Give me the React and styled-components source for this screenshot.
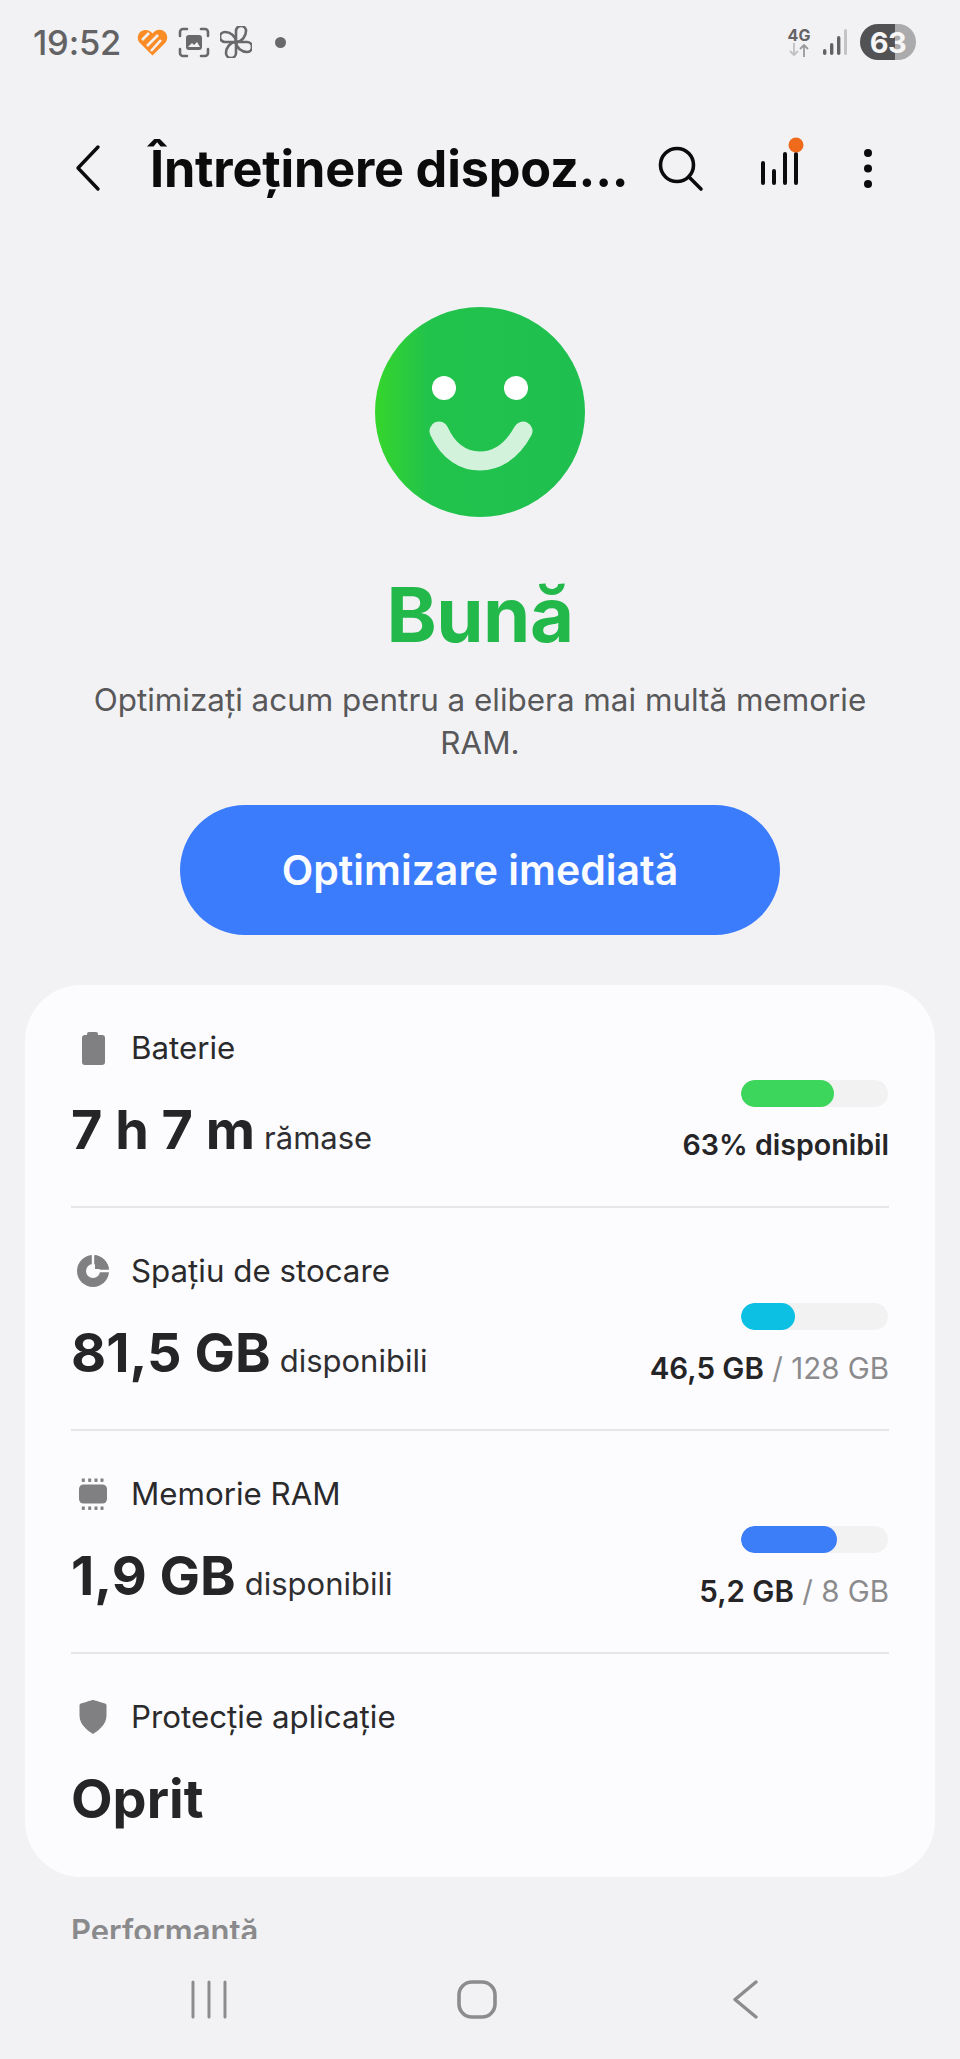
import React from "react";
import styled, { createGlobalStyle } from "styled-components";

const Global = createGlobalStyle`
  html, body { margin: 0; padding: 0; background: #f2f2f4; overflow: hidden; }
  body { font-family: "Inter", "Noto Sans", sans-serif; }
  * { box-sizing: border-box; }
`;

const Page = styled.div`
  width: 960px;
  height: 2059px;
  display: flex;
  flex-direction: column;
  background: #f2f2f4;
  overflow: hidden;
`;
const Scroll = styled.div`
  height: 1939px;
  overflow: hidden;
  flex: none;
`;
const StatusBar = styled.div`
  height: 84px;
  padding: 0 44px 0 33px;
  display: flex;
  align-items: center;
  justify-content: space-between;
`;
const StatusGroup = styled.div`
  display: flex;
  align-items: center;
`;
const Time = styled.span`
  font-size: 34.5px;
  font-weight: 500;
  color: #636365;
  letter-spacing: -0.2px;
  margin-right: 16px;
`;
const StatusIcon = styled.svg`
  display: block;
  flex: none;
  margin-right: ${(p) => p.$mr || 0}px;
`;
const NetBlock = styled.div`
  width: 24px;
  display: flex;
  flex-direction: column;
  align-items: center;
  margin-right: 12px;
`;
const NetText = styled.span`
  font-size: 16px;
  line-height: 16px;
  font-weight: 700;
  color: #646466;
`;
const Battery = styled.div`
  width: 56px;
  height: 36px;
  border-radius: 18px;
  background: linear-gradient(90deg, #525254 0 63%, #ababad 63% 100%);
  color: #f6f6f6;
  font-size: 29px;
  font-weight: 700;
  display: flex;
  align-items: center;
  justify-content: center;
  letter-spacing: -0.5px;
`;
const Header = styled.div`
  height: 92px;
  margin-top: 38px;
  padding-left: 76px;
  display: flex;
  align-items: center;
`;
const Title = styled.h1`
  margin: 0 0 0 50px;
  font-size: 50.4px;
  font-weight: 700;
  color: #0b0b0c;
  white-space: nowrap;
  width: 508px;
  letter-spacing: -0.2px;
`;
const HeaderIcon = styled.svg`
  display: block;
  flex: none;
  overflow: visible;
  margin-left: ${(p) => p.$ml || 0}px;
`;
const Hero = styled.div`
  display: flex;
  flex-direction: column;
  align-items: center;
  padding-top: 93px;
`;
const Headline = styled.div`
  font-size: 76px;
  line-height: 96px;
  font-weight: 700;
  color: #22b84a;
  margin-top: 49px;
  letter-spacing: -0.5px;
`;
const Sub = styled.p`
  margin: 17px 0 0;
  width: 800px;
  font-size: 31.4px;
  line-height: 43px;
  color: #58585a;
  text-align: center;
`;
const OptimizeButton = styled.button`
  width: 600px;
  height: 130px;
  margin-top: 40px;
  border: none;
  border-radius: 65px;
  background: #3b7cfd;
  color: #fbfcff;
  font-family: inherit;
  font-size: 41px;
  font-weight: 600;
`;
const Card = styled.div`
  margin: 50px 25px 0;
  padding: 0 46px;
  border-radius: 56px;
  background: #fcfcfe;
`;
const Row = styled.div`
  height: 223px;
  padding-top: 43px;
  display: flex;
  justify-content: space-between;
  border-bottom: ${(p) => (p.$last ? "none" : "2px solid #e6e6e8")};
`;
const LeftCol = styled.div`
  display: flex;
  flex-direction: column;
`;
const LabelRow = styled.div`
  height: 40px;
  display: flex;
  align-items: center;
`;
const IconSlot = styled.div`
  width: 60px;
  height: 40px;
  display: flex;
  align-items: center;
`;
const Label = styled.span`
  font-size: 31.3px;
  color: #2a2a2c;
`;
const ValueRow = styled.div`
  margin-top: 30px;
  display: flex;
  align-items: baseline;
  white-space: nowrap;
`;
const Value = styled.span`
  font-size: 54px;
  line-height: 64px;
  font-weight: 700;
  color: #252527;
`;
const Unit = styled.span`
  font-size: 31px;
  color: #2f2f31;
  margin-left: 9px;
`;
const RightCol = styled.div`
  width: 300px;
  padding-top: 52px;
  display: flex;
  flex-direction: column;
  align-items: flex-end;
`;
const Track = styled.div`
  width: 147px;
  height: 27px;
  margin-right: 1px;
  border-radius: 14px;
  background: #f2f2f3;
  overflow: hidden;
`;
const Fill = styled.div`
  height: 100%;
  border-radius: 14px;
  background: ${(p) => p.$color};
`;
const Usage = styled.div`
  margin-top: 20px;
  font-size: ${(p) => p.$size}px;
  line-height: 36px;
  white-space: nowrap;
  color: #8b8b8d;
`;
const Strong = styled.span`
  font-weight: 600;
  color: #252527;
`;
const SectionLabel = styled.div`
  margin: 35px 0 0 71px;
  font-size: 31px;
  line-height: 38px;
  font-weight: 600;
  color: #8a8a8c;
`;
const NavBar = styled.div`
  flex: 1;
  display: grid;
  grid-template-columns: repeat(3, 268.5px);
  justify-content: center;
  align-items: start;
  padding: 41px 6px 0 0;
`;
const NavCell = styled.div`
  display: flex;
  justify-content: center;
`;
const Glyph = styled.svg`
  display: block;
`;

const Heart = () => (
  <StatusIcon width="31" height="27" viewBox="0 0 31 27" $mr={10}>
    <path d="M15.5 26.5 2.5 13.5C-1 9.5 1 2 7.5 1c3.5-.4 6 1 8 3.5C17.5 2 20.500.4 24 1c6 1 8 8 4.500 12.500z" fill="#fb8b24" />
    <path d="M5 11 12 4M10 17 21 6M14 22 24 11" stroke="#f2f2f4" strokeWidth="2.6" fill="none" />
  </StatusIcon>
);
const Capture = () => (
  <StatusIcon width="32" height="31" viewBox="0 0 32 31" $mr={10} fill="none">
    <path d="M2 9V5a3 3 0 0 1 3-3h4M23 2h4a3 3 0 0 1 3 3v4M30 22v4a3 3 0 0 1-3 3h-4M9 29H5a3 3 0 0 1-3-3v-4" stroke="#69696b" strokeWidth="2.6" strokeLinecap="round" />
    <rect x="8" y="8" width="16" height="15" rx="3" fill="#69696b" />
    <path d="M10 20l4-4 2 2 3-3 3 5z" fill="#f2f2f4" />
  </StatusIcon>
);
const Pinwheel = () => (
  <StatusIcon width="32" height="32" viewBox="0 0 32 32" $mr={23} fill="none" stroke="#69696b" strokeWidth="2.6" strokeLinejoin="round">
    <path d="M16 16V5a5 5 0 0 1 10 0c0 5-4 11-10 11z" />
    <path d="M16 16h11a5 5 0 0 1 0 10c-5 0-11-4-11-10z" />
    <path d="M16 16v11a5 5 0 0 1-10 0c0-5 4-11 10-11z" />
    <path d="M16 16H5a5 5 0 0 1 0-10c5 0 11 4 11 10z" />
  </StatusIcon>
);
const Dot = () => (
  <StatusIcon width="11" height="11" viewBox="0 0 11 11">
    <circle cx="5.5" cy="5.5" r="5.5" fill="#69696b" />
  </StatusIcon>
);
const Arrows = () => (
  <Glyph width="22" height="14" viewBox="0 0 22 14" fill="none" strokeWidth="1.8">
    <path d="M6 0v12M2 8l4 4 4-4" stroke="#c0c0c2" />
    <path d="M16 14V2M12 6l4-4 4 4" stroke="#9a9a9c" />
  </Glyph>
);
const Signal = () => (
  <StatusIcon width="24" height="26" viewBox="0 0 24 26" $mr={13}>
    <rect x="0" y="20" width="3.4" height="6" rx="1.7" fill="#636365" />
    <rect x="7" y="14" width="3.4" height="12" rx="1.7" fill="#636365" />
    <rect x="14" y="7" width="3.4" height="19" rx="1.7" fill="#636365" />
    <rect x="21" y="0" width="3" height="26" rx="1.5" fill="#c4c4c6" />
  </StatusIcon>
);

const Smile = () => (
  <Glyph width="210" height="210" viewBox="0 0 210 210">
    <defs>
      <linearGradient id="sm" x1="0" x2="1" y1="0" y2="0">
        <stop offset="0" stopColor="#35d62b" />
        <stop offset="0.25" stopColor="#22c34b" />
        <stop offset="1" stopColor="#1fbf50" />
      </linearGradient>
    </defs>
    <circle cx="105" cy="105" r="105" fill="url(#sm)" />
    <circle cx="69" cy="81" r="12" fill="#fff" />
    <circle cx="141" cy="81" r="12" fill="#fff" />
    <path d="M64 124c10 22 26 30 41 30s31-8 43-30" fill="none" stroke="#d2f2dc" strokeWidth="19" strokeLinecap="round" />
  </Glyph>
);

const BatteryGlyph = () => (
  <Glyph width="60" height="34" viewBox="0 0 60 34">
    <path d="M16 3a2 2 0 0 1 2-2h7a2 2 0 0 1 2 2v1h4a3 3 0 0 1 3 3v24a3 3 0 0 1-3 3H14a3 3 0 0 1-3-3V7a3 3 0 0 1 3-3h2z" fill="#808082" />
  </Glyph>
);
const StorageGlyph = () => (
  <Glyph width="60" height="34" viewBox="0 0 60 34">
    <circle cx="22" cy="17" r="16" fill="#808082" />
    <circle cx="22" cy="17" r="7" fill="#fcfcfe" />
    <path d="M22 0v17h17" fill="none" stroke="#fcfcfe" strokeWidth="2.4" />
    <path d="M24.200 14.800V1.200A16 16 0 0 1 37.800 14.800z" fill="#808082" />
    <path d="M24 5.500h3v7h7v2.500H24z" fill="#808082" />
  </Glyph>
);
const RamGlyph = () => (
  <Glyph width="60" height="34" viewBox="0 0 60 34">
    <rect x="8" y="7.500" width="28" height="19" rx="4.500" fill="#808082" />
    {[12.3, 18.7, 25, 31].map((x) => (
      <React.Fragment key={x}>
        <rect x={x - 1.5} y="1.500" width="3" height="3.400" fill="#808082" />
        <rect x={x - 1.5} y="29.500" width="3" height="3.400" fill="#808082" />
      </React.Fragment>
    ))}
  </Glyph>
);
const ShieldGlyph = () => (
  <Glyph width="60" height="34" viewBox="0 0 60 34">
    <path d="M22 0c1 0 8 2.400 12 3.500 1 .3 1.500 1 1.500 2v10c0 9-8 15-13.500 18.500C16.500 30.500 8.500 24.500 8.500 15.500v-10c0-1 .5-1.700 1.500-2C14 2.400 21 0 22 0z" fill="#808082" />
  </Glyph>
);

const rows = [
  { glyph: <BatteryGlyph />, label: "Baterie", value: "7 h 7 m", unit: "rămase", pct: 63, color: "#3dd65c", strong: "63% disponibil", size: 28.6 },
  { glyph: <StorageGlyph />, label: "Spațiu de stocare", value: "81,5 GB", unit: "disponibili", pct: 37, color: "#0cc0e4", strong: "46,5 GB", rest: " / 128 GB", size: 29.5 },
  { glyph: <RamGlyph />, label: "Memorie RAM", value: "1,9 GB", unit: "disponibili", pct: 65, color: "#3c7df8", strong: "5,2 GB", rest: " / 8 GB", size: 29.5 },
  { glyph: <ShieldGlyph />, label: "Protecție aplicație", value: "Oprit" },
];

export default function App() {
  return (
    <Page>
      <Global />
      <Scroll>
        <StatusBar>
          <StatusGroup>
            <Time>19:52</Time>
            <Heart />
            <Capture />
            <Pinwheel />
            <Dot />
          </StatusGroup>
          <StatusGroup>
            <NetBlock>
              <NetText>4G</NetText>
              <Arrows />
            </NetBlock>
            <Signal />
            <Battery>63</Battery>
          </StatusGroup>
        </StatusBar>
        <Header>
          <HeaderIcon width="24" height="46" viewBox="0 0 24 46" fill="none">
            <path d="M22 2 2 23l20 21" stroke="#0b0b0c" strokeWidth="3.4" strokeLinecap="round" strokeLinejoin="round" />
          </HeaderIcon>
          <Title>Întreținere dispoz...</Title>
          <HeaderIcon width="45" height="44" viewBox="0 0 45 44" fill="none" stroke="#0b0b0c" strokeWidth="3.6" strokeLinecap="round">
            <circle cx="19" cy="19" r="16.500" />
            <path d="M31 31l12 12" />
          </HeaderIcon>
          <HeaderIcon width="40" height="33" viewBox="0 0 40 33" fill="none" stroke="#0b0b0c" strokeWidth="4" strokeLinecap="round" $ml={57}>
            <path d="M3 11v20M14 19v12M25 2v29M36 2v29" />
            <circle cx="36" cy="-7" r="7.500" fill="#ef6a1b" stroke="none" />
          </HeaderIcon>
          <HeaderIcon width="8" height="39" viewBox="0 0 8 39" $ml={64}>
            <circle cx="4" cy="4" r="4" fill="#0b0b0c" />
            <circle cx="4" cy="19.500" r="4" fill="#0b0b0c" />
            <circle cx="4" cy="35" r="4" fill="#0b0b0c" />
          </HeaderIcon>
        </Header>
        <Hero>
          <Smile />
          <Headline>Bună</Headline>
          <Sub>Optimizați acum pentru a elibera mai multă memorie RAM.</Sub>
          <OptimizeButton>Optimizare imediată</OptimizeButton>
        </Hero>
        <Card>
          {rows.map((r, i) => (
            <Row key={r.label} $last={i === rows.length - 1}>
              <LeftCol>
                <LabelRow>
                  <IconSlot>{r.glyph}</IconSlot>
                  <Label>{r.label}</Label>
                </LabelRow>
                <ValueRow>
                  <Value>{r.value}</Value>
                  {r.unit && <Unit>{r.unit}</Unit>}
                </ValueRow>
              </LeftCol>
              {r.pct && (
                <RightCol>
                  <Track>
                    <Fill $color={r.color} style={{ width: `${r.pct}%` }} />
                  </Track>
                  <Usage $size={r.size}>
                    <Strong>{r.strong}</Strong>
                    {r.rest}
                  </Usage>
                </RightCol>
              )}
            </Row>
          ))}
        </Card>
        <SectionLabel>Performanță</SectionLabel>
      </Scroll>
      <NavBar>
        <NavCell>
          <Glyph width="36" height="39" viewBox="0 0 36 39" stroke="#8c8c8e" strokeWidth="3" strokeLinecap="round">
            <path d="M2 2v35M18 2v35M34 2v35" />
          </Glyph>
        </NavCell>
        <NavCell>
          <Glyph width="40" height="39" viewBox="0 0 40 39" fill="none" stroke="#8c8c8e" strokeWidth="3.600">
            <rect x="2" y="2" width="36" height="35" rx="13" />
          </Glyph>
        </NavCell>
        <NavCell>
          <Glyph width="25" height="39" viewBox="0 0 25 39" fill="none" stroke="#8c8c8e" strokeWidth="3.400" strokeLinecap="round" strokeLinejoin="round">
            <path d="M23 2 2 19.500 23 37" />
          </Glyph>
        </NavCell>
      </NavBar>
    </Page>
  );
}
